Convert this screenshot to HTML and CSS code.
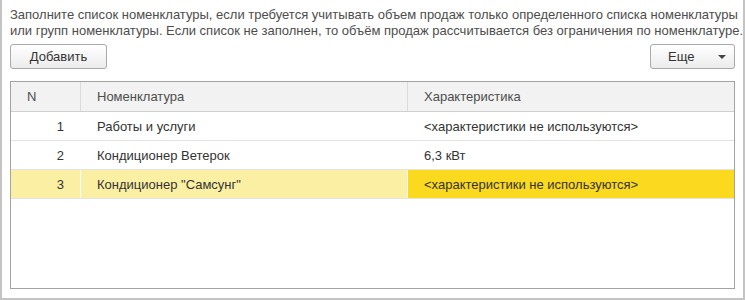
FILE: index.html
```html
<!DOCTYPE html>
<html lang="ru">
<head>
    <meta charset="UTF-8">
    <title>Номенклатура</title>
    <link rel="stylesheet" href="styles.css">
</head>
<body>
    <div class="frame">
        <p class="hint">Заполните список номенклатуры, если требуется учитывать объем продаж только определенного списка номенклатуры<br>или групп номенклатуры. Если список не заполнен, то объём продаж рассчитывается без ограничения по номенклатуре.</p>

        <div class="toolbar">
            <button class="btn btn-add">Добавить</button>
            <button class="btn btn-more">Еще <span class="arrow"></span></button>
        </div>

        <div class="grid">
            <div class="grid-row grid-head">
                <div class="cell cell-n">N</div>
                <div class="cell">Номенклатура</div>
                <div class="cell">Характеристика</div>
            </div>
            <div class="grid-row">
                <div class="cell cell-n num">1</div>
                <div class="cell">Работы и услуги</div>
                <div class="cell">&lt;характеристики не используются&gt;</div>
            </div>
            <div class="grid-row">
                <div class="cell cell-n num">2</div>
                <div class="cell">Кондиционер Ветерок</div>
                <div class="cell">6,3 кВт</div>
            </div>
            <div class="grid-row selected">
                <div class="cell cell-n num">3</div>
                <div class="cell">Кондиционер "Самсунг"</div>
                <div class="cell current">&lt;характеристики не используются&gt;</div>
            </div>
        </div>
    </div>
</body>
</html>
```

FILE: styles.css
```css
html, body {
    margin: 0;
    padding: 0;
    background-color: #ffffff;
}
body {
    font-family: "Liberation Sans", Arial, sans-serif;
    font-size: 13px;
    color: #333333;
}
.frame {
    height: 300px;
    box-sizing: border-box;
    border: 2px solid #c4c4c4;
    border-top: none;
    padding: 0 8px 9px 8px;
    display: flex;
    flex-direction: column;
}
.hint {
    margin: 7px -8px 0 0;
    line-height: 16px;
    color: #4d4d4d;
    white-space: nowrap;
}
.toolbar {
    display: flex;
    justify-content: space-between;
    margin-top: 5px;
}
.btn {
    height: 25px;
    box-sizing: border-box;
    border: 1px solid #a9a9a9;
    border-radius: 3px;
    background: linear-gradient(#ffffff, #ececec);
    font-family: inherit;
    font-size: 13px;
    color: #333333;
    padding: 0;
    display: flex;
    align-items: center;
    cursor: pointer;
}
.btn-add {
    width: 97px;
    justify-content: center;
}
.btn-more {
    width: 85px;
    padding-left: 17px;
}
.arrow {
    width: 0;
    height: 0;
    margin-left: 24px;
    border-left: 4px solid transparent;
    border-right: 4px solid transparent;
    border-top: 4px solid #444444;
}
.grid {
    flex: 1;
    margin-top: 12px;
    border: 1px solid #a3a3a3;
}
.grid-row {
    display: grid;
    grid-template-columns: 70px 327px 1fr;
    height: 29px;
    box-sizing: border-box;
    border-bottom: 1px solid #e3e3e3;
}
.grid-head {
    height: 30px;
    background-color: #f2f2f2;
    border-bottom: 1px solid #cfcfcf;
    color: #4d4d4d;
}
.cell {
    display: flex;
    align-items: center;
    padding-left: 16px;
    border-right: 1px solid #ffffff;
    white-space: nowrap;
}
.cell:last-child {
    border-right: none;
}
.grid-head .cell {
    border-right-color: #dcdcdc;
}
.num {
    justify-content: flex-end;
    padding-left: 0;
    padding-right: 16px;
}
.selected {
    background-color: #fbefa3;
}
.selected .current {
    background-color: #fbd91f;
}
```
